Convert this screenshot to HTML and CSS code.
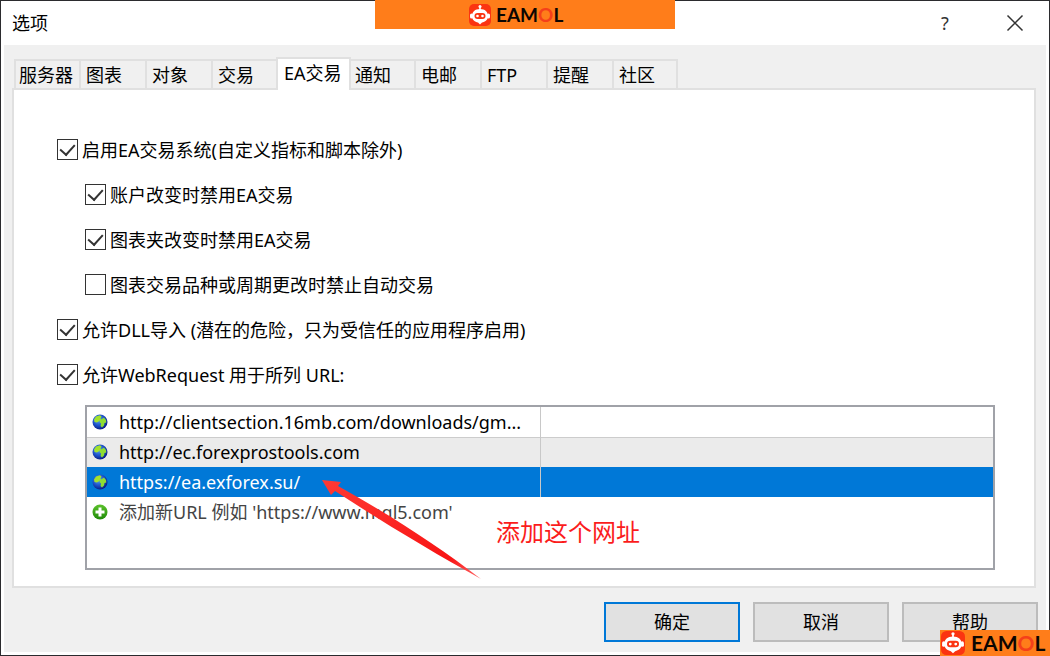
FILE: index.html
```html
<!DOCTYPE html>
<html lang="zh-CN">
<head>
<meta charset="utf-8">
<title>选项</title>
<link rel="stylesheet" href="styles.css">
</head>
<body>
<svg class="defs" aria-hidden="true">
  <defs>
    <radialGradient id="sea" cx="40%" cy="35%" r="65%">
      <stop offset="0" stop-color="#5aa6f2"/>
      <stop offset="0.6" stop-color="#1c50c8"/>
      <stop offset="1" stop-color="#0a1f86"/>
    </radialGradient>
    <linearGradient id="leaf" x1="0" y1="0" x2="0" y2="1">
      <stop offset="0" stop-color="#5cc22c"/>
      <stop offset="1" stop-color="#1f8a08"/>
    </linearGradient>
    <linearGradient id="arrow" x1="0" y1="0" x2="1" y2="1">
      <stop offset="0" stop-color="#ff3a34"/>
      <stop offset="0.8" stop-color="#f81414"/>
      <stop offset="1" stop-color="#ff6a6a"/>
    </linearGradient>
    <symbol id="globe" viewBox="0 0 16 16">
      <circle cx="8" cy="8" r="7.5" fill="url(#sea)"/>
      <path d="M2 5.500 4 2.500 8 1.200 9.500 2.500 8.500 4.500 9 6 7 7 6 8 4.500 8.500 2.500 8Z" fill="#a3e22c"/>
      <path d="M8 6 10.500 4.500 12 3.500 14 6 14.300 8.500 12.500 9 12 11.500 10 13.500 8.500 12 9 9.500 7.500 8Z" fill="#8edc32"/>
    </symbol>
    <symbol id="robot" viewBox="0 0 22 22">
      <rect width="22" height="22" rx="5" fill="#fb3411"/>
      <path d="M10.2 2h1.6v4h-1.6z" fill="#fff"/>
      <circle cx="11" cy="2.6" r="1.5" fill="#fff"/>
      <rect x="1" y="9.5" width="3" height="5" rx="1.5" fill="#fff"/>
      <rect x="18" y="9.5" width="3" height="5" rx="1.5" fill="#fff"/>
      <path d="M11 5c5 0 8 2.800 8 7 0 4-3 6-6 6.500L11 20.500 9 18.500C6 18 3 16 3 12c0-4.200 3-7 8-7z" fill="#fff"/>
      <rect x="5.500" y="9" width="11" height="6" rx="3" fill="#fb3411"/>
      <circle cx="8.500" cy="12" r="1.300" fill="#fff"/>
      <circle cx="13.500" cy="12" r="1.300" fill="#fff"/>
    </symbol>
  </defs>
</svg>

<main class="window">
  <header class="titlebar">
    <h1 class="title">选项</h1>
    <button class="caption-btn" type="button">?</button>
    <button class="caption-btn" type="button" aria-label="关闭">
      <svg width="18" height="18" viewBox="0 0 18 18"><path d="M1.500 1.500 16.500 16.500M16.500 1.500 1.500 16.500" stroke="#333" stroke-width="1.500" fill="none"/></svg>
    </button>
  </header>

  <div class="client">
    <nav class="tabs" role="tablist">
      <button class="tab" role="tab" type="button">服务器</button>
      <button class="tab" role="tab" type="button">图表</button>
      <button class="tab" role="tab" type="button">对象</button>
      <button class="tab" role="tab" type="button">交易</button>
      <button class="tab tab-active" role="tab" type="button" aria-selected="true">EA交易</button>
      <button class="tab" role="tab" type="button">通知</button>
      <button class="tab" role="tab" type="button">电邮</button>
      <button class="tab" role="tab" type="button">FTP</button>
      <button class="tab" role="tab" type="button">提醒</button>
      <button class="tab" role="tab" type="button">社区</button>
    </nav>

    <section class="panel" role="tabpanel">
      <div class="options">
        <label class="option"><input class="check" type="checkbox" checked><span>启用EA交易系统(自定义指标和脚本除外)</span></label>
        <label class="option option-sub"><input class="check" type="checkbox" checked><span>账户改变时禁用EA交易</span></label>
        <label class="option option-sub"><input class="check" type="checkbox" checked><span>图表夹改变时禁用EA交易</span></label>
        <label class="option option-sub"><input class="check" type="checkbox"><span>图表交易品种或周期更改时禁止自动交易</span></label>
        <label class="option"><input class="check" type="checkbox" checked><span>允许DLL导入 (潜在的危险，只为受信任的应用程序启用)</span></label>
        <label class="option"><input class="check" type="checkbox" checked><span>允许WebRequest 用于所列 URL:</span></label>
      </div>

      <div class="url-box">
        <table class="urls">
          <tbody>
            <tr class="row"><td class="url"><svg class="icon"><use href="#globe"/></svg>http://clientsection.16mb.com/downloads/gm...</td><td></td></tr>
            <tr class="row row-alt"><td class="url"><svg class="icon"><use href="#globe"/></svg>http://ec.forexprostools.com</td><td></td></tr>
            <tr class="row row-selected"><td class="url"><svg class="icon"><use href="#globe"/></svg>https://ea.exforex.su/</td><td></td></tr>
            <tr class="row row-new"><td class="url" colspan="2"><svg class="icon" viewBox="0 0 16 16"><circle cx="8" cy="8" r="7.500" fill="url(#leaf)"/><path d="M6.500 3.500h3v3h3v3h-3v3h-3v-3h-3v-3h3z" fill="#fff"/></svg>添加新URL 例如 'https://www.mql5.com'</td></tr>
          </tbody>
        </table>
        <svg class="pointer" width="162" height="104" viewBox="0 0 162 104" aria-hidden="true"><path d="M0 3 19 5 16 9 C70 39 116 69 159 102 C112 76 62 46 13 14L9 18Z" fill="url(#arrow)"/></svg>
        <p class="note">添加这个网址</p>
      </div>
    </section>

    <footer class="actions">
      <button class="btn btn-default" type="button">确定</button>
      <button class="btn" type="button">取消</button>
      <button class="btn" type="button">帮助</button>
    </footer>
  </div>
</main>

<div class="brand brand-top"><svg class="brand-icon"><use href="#robot"/></svg><span>EAM<span class="brand-o">O</span>L</span></div>
<div class="brand brand-corner"><svg class="brand-icon"><use href="#robot"/></svg><span>EAM<span class="brand-o">O</span>L</span></div>
</body>
</html>
```
FILE: styles.css
```css
* {
  box-sizing: border-box;
}

body {
  margin: 0;
  position: relative;
  font: 18px/24px "Noto Sans", "Noto Sans CJK SC", sans-serif;
  color: #000;
}

button {
  font: inherit;
  color: inherit;
}

.defs {
  position: absolute;
  width: 0;
  height: 0;
}

.window {
  display: flex;
  flex-direction: column;
  min-height: 100vh;
  padding: 0 3px 3px;
  border: 1px solid #2b2b2e;
  background: #fff;
}

.titlebar {
  display: flex;
  align-items: center;
  height: 44px;
  padding: 0 4px 0 8px;
}

.title {
  flex: 1;
  margin: 0;
  font-size: 18px;
  font-weight: 400;
}

.caption-btn {
  display: flex;
  align-items: center;
  justify-content: center;
  width: 70px;
  height: 40px;
  padding: 0;
  border: 0;
  background: none;
  color: #333;
}

.caption-btn:last-child {
  width: 54px;
  margin-left: 8px;
}

.client {
  flex: 1;
  display: flex;
  flex-direction: column;
  padding: 12px 10px 10px 8px;
  background: #f0f0f0;
}

.tabs {
  display: flex;
  align-items: flex-end;
  margin: 0 2px -2px;
}

.tab {
  width: 66px;
  height: 31px;
  padding: 0 0 0 5px;
  border: solid #e0e0e0;
  border-width: 2px 0 2px 2px;
  background: #f0f0f0;
  text-align: left;
  white-space: nowrap;
}

.tab:first-child {
  width: 65px;
  padding-left: 3px;
}

.tab:last-child {
  border-right-width: 2px;
}

.tab-active {
  position: relative;
  width: 75px;
  height: 33px;
  margin: 0 -3px 0 -1px;
  padding: 0 0 3px 6px;
  border-width: 2px 2px 0;
  background: #fff;
}

.panel {
  flex: 1;
  padding: 37px 39px 16px 43px;
  border: 2px solid #e0e0e0;
  background: #fff;
}

.options {
  display: flex;
  flex-direction: column;
}

.option {
  display: flex;
  align-items: center;
  gap: 4px;
  height: 45px;
}

.option-sub {
  padding-left: 28px;
}

.check {
  display: grid;
  place-items: center;
  width: 21px;
  height: 21px;
  margin: 0;
  appearance: none;
  border: 1px solid #333;
  background: #fff;
}

.check:checked::after {
  content: "";
  width: 7px;
  height: 12px;
  margin-bottom: 4px;
  border: solid #333;
  border-width: 0 2px 2px 0;
  transform: rotate(42deg);
}

.url-box {
  position: relative;
  height: 165px;
  margin: 8px 0 0 28px;
  border: 2px solid #a0a2a8;
}

.urls {
  width: 100%;
  table-layout: fixed;
  border-collapse: collapse;
}

.row td {
  height: 30px;
  padding: 0;
}

.row .url {
  width: 453px;
  padding-left: 5px;
  border-right: 1px solid #c8c8c8;
  white-space: nowrap;
}

.row-alt {
  background: #ebebeb;
  border-top: 1px solid #ccc;
}

.row-selected {
  background: #0078d7;
  color: #fff;
}

.row-new {
  color: #444;
}

.row-new .url {
  border: 0;
}

.icon {
  width: 16px;
  height: 16px;
  margin-right: 11px;
  vertical-align: -1px;
}

.pointer {
  position: absolute;
  left: 235px;
  top: 70px;
}

.note {
  position: absolute;
  left: 409px;
  top: 109px;
  margin: 0;
  color: #fb1c1c;
  font-size: 24px;
  line-height: 32px;
}

.actions {
  display: flex;
  justify-content: flex-end;
  gap: 13px;
  padding: 14px 0 0;
  margin-right: -2px;
}

.btn {
  width: 136px;
  height: 40px;
  border: 2px solid #bcbcbc;
  background: #e1e1e1;
}

.btn-default {
  border-color: #0078d7;
}

.brand {
  position: absolute;
  display: flex;
  align-items: center;
  background: #ff7d1a;
  color: #0c0602;
  font-family: Lato, sans-serif;
  font-weight: 700;
}

.brand-top {
  top: 0;
  left: 50%;
  width: 300px;
  height: 29px;
  margin-left: -150px;
  padding-left: 94px;
  gap: 5px;
  font-size: 19px;
}

.brand-corner {
  right: 0;
  bottom: 0;
  width: 110px;
  height: 26px;
  padding-left: 1px;
  gap: 6px;
  font-size: 21px;
}

.brand-icon {
  width: 22px;
  height: 22px;
}

.brand-corner .brand-icon {
  width: 24px;
  height: 24px;
}

.brand-o {
  color: #f5401a;
}
```
